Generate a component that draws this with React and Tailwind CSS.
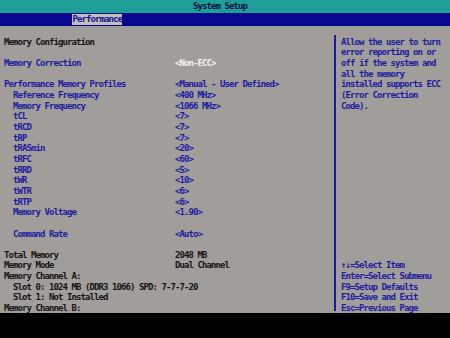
import React from 'react';

const NAVY = 'text-[#1c1ca0]';
const BLACK = 'text-[#141414]';
const WHITE = 'text-[#f2f2f2]';

const rows = [
  { label: 'Memory Configuration', tone: BLACK },
  null,
  { label: 'Memory Correction', value: '<Non-ECC>', tone: NAVY, valueTone: WHITE },
  null,
  { label: 'Performance Memory Profiles', value: '<Manual - User Defined>', tone: NAVY },
  { label: 'Reference Frequency', value: '<400 MHz>', tone: NAVY, indent: true },
  { label: 'Memory Frequency', value: '<1066 MHz>', tone: NAVY, indent: true },
  { label: 'tCL', value: '<7>', tone: NAVY, indent: true },
  { label: 'tRCD', value: '<7>', tone: NAVY, indent: true },
  { label: 'tRP', value: '<7>', tone: NAVY, indent: true },
  { label: 'tRASmin', value: '<20>', tone: NAVY, indent: true },
  { label: 'tRFC', value: '<60>', tone: NAVY, indent: true },
  { label: 'tRRD', value: '<5>', tone: NAVY, indent: true },
  { label: 'tWR', value: '<10>', tone: NAVY, indent: true },
  { label: 'tWTR', value: '<6>', tone: NAVY, indent: true },
  { label: 'tRTP', value: '<6>', tone: NAVY, indent: true },
  { label: 'Memory Voltage', value: '<1.90>', tone: NAVY, indent: true },
  null,
  { label: 'Command Rate', value: '<Auto>', tone: NAVY, indent: true },
  null,
  { label: 'Total Memory', value: '2048 MB', tone: BLACK },
  { label: 'Memory Mode', value: 'Dual Channel', tone: BLACK },
  { label: 'Memory Channel A:', tone: BLACK },
  { label: 'Slot 0: 1024 MB (DDR3 1066) SPD: 7-7-7-20', tone: BLACK, indent: true },
  { label: 'Slot 1: Not Installed', tone: BLACK, indent: true },
  { label: 'Memory Channel B:', tone: BLACK },
];

const helpLines = [
  'Allow the user to turn',
  'error reporting on or',
  'off if the system and',
  'all the memory',
  'installed supports ECC',
  '(Error Correction',
  'Code).',
];

const keyLines = [
  '\u2191\u2193=Select Item',
  'Enter=Select Submenu',
  'F9=Setup Defaults',
  'F10=Save and Exit',
  'Esc=Previous Page',
];

const App = () => {
  const rightLines = [...helpLines, ...Array(14).fill(''), ...keyLines];

  return (
    <div className="w-[450px] h-[338px] bg-black overflow-hidden font-['DejaVu_Sans_Mono',monospace] font-bold text-[9px] tracking-[-0.92px] leading-[10.67px] whitespace-pre">
      {/* Title bar */}
      <div className="h-[13px] bg-[#1e9e96] pl-[193px] text-[#10104a] leading-[13px]">System Setup</div>

      {/* Tab bar */}
      <div className="h-[13px] bg-[#08088e] pl-[72px] flex items-center">
        <div className="h-[11px] bg-[#c2bec0] text-[#12128e] px-[0.5px] leading-[11px]">Performance</div>
      </div>

      {/* Main */}
      <div className="h-[287px] bg-[#a19d9a] flex">
        <div className="w-[334px] pl-[4px] pt-[10.7px]">
          {rows.map((row, i) =>
            row ? (
              <div key={i} className={`flex h-[10.67px] ${row.tone}`}>
                <div className={row.value ? 'w-[171px] shrink-0' : ''}>
                  {row.indent ? '  ' : ''}
                  {row.label}
                </div>
                {row.value && <div className={row.valueTone || ''}>{row.value}</div>}
              </div>
            ) : (
              <div key={i} className="h-[10.67px]" />
            )
          )}
        </div>

        <div className="mt-[9px] h-[276px] border-l-2 border-[#1c1ca0] pl-[5px] pt-[1.7px]">
          {rightLines.map((line, i) => (
            <div key={i} className={`h-[10.67px] ${NAVY}`}>{line}</div>
          ))}
        </div>
      </div>
    </div>
  );
};

export default App;
